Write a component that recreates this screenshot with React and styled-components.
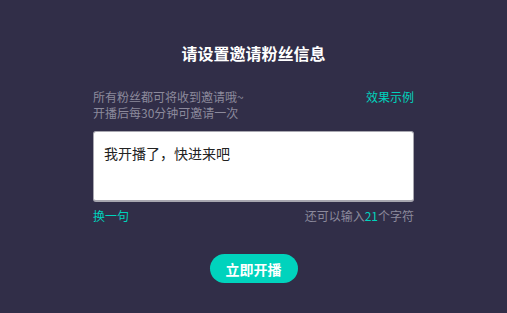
import styled, { createGlobalStyle } from 'styled-components';

const GlobalStyle = createGlobalStyle`
  html, body {
    margin: 0;
    padding: 0;
    background: #312e48;
  }
  body {
    font-family: "Noto Sans CJK SC", "Noto Sans", sans-serif;
  }
`;

const Panel = styled.div`
  width: 507px;
  height: 313px;
  box-sizing: border-box;
  padding: 42px 93px 0;
  background: #312e48;
  display: flex;
  flex-direction: column;
`;

const Title = styled.h2`
  margin: 0;
  font-size: 16px;
  line-height: 22px;
  font-weight: 700;
  color: #ffffff;
  text-align: center;
`;

const InfoRow = styled.div`
  display: flex;
  justify-content: space-between;
  align-items: flex-start;
  margin-top: 25px;
`;

const Hint = styled.p`
  margin: 0;
  font-size: 12px;
  line-height: 16px;
  color: #8c8a9c;
`;

const Link = styled.a`
  font-size: 12px;
  line-height: 16px;
  color: #00d3bd;
  cursor: pointer;
  text-decoration: none;
`;

const MessageBox = styled.div`
  margin-top: 10px;
  height: 71px;
  box-sizing: border-box;
  background: #ffffff;
  border: 1px solid #a8a7b0;
  border-bottom-width: 2px;
  border-radius: 3px;
  padding: 11px 10px;
  font-size: 14px;
  line-height: 20px;
  color: #222222;
`;

const CountRow = styled.div`
  display: flex;
  justify-content: space-between;
  margin-top: 6px;
  font-size: 12px;
  line-height: 16px;
`;

const Counter = styled.span`
  color: #8c8a9c;
`;

const Num = styled.span`
  color: #00d3bd;
`;

const StartButton = styled.button`
  align-self: center;
  margin-top: 30px;
  width: 88px;
  height: 29px;
  border: none;
  border-radius: 15px;
  background: #00d3bd;
  color: #ffffff;
  font-family: inherit;
  font-size: 14px;
  font-weight: 700;
  cursor: pointer;
`;

function App() {
  return (
    <>
      <GlobalStyle />
      <Panel>
        <Title>请设置邀请粉丝信息</Title>
        <InfoRow>
          <Hint>
            所有粉丝都可将收到邀请哦~
            <br />
            开播后每30分钟可邀请一次
          </Hint>
          <Link>效果示例</Link>
        </InfoRow>
        <MessageBox>我开播了，快进来吧</MessageBox>
        <CountRow>
          <Link>换一句</Link>
          <Counter>
            还可以输入<Num>21</Num>个字符
          </Counter>
        </CountRow>
        <StartButton>立即开播</StartButton>
      </Panel>
    </>
  );
}

export default App;
